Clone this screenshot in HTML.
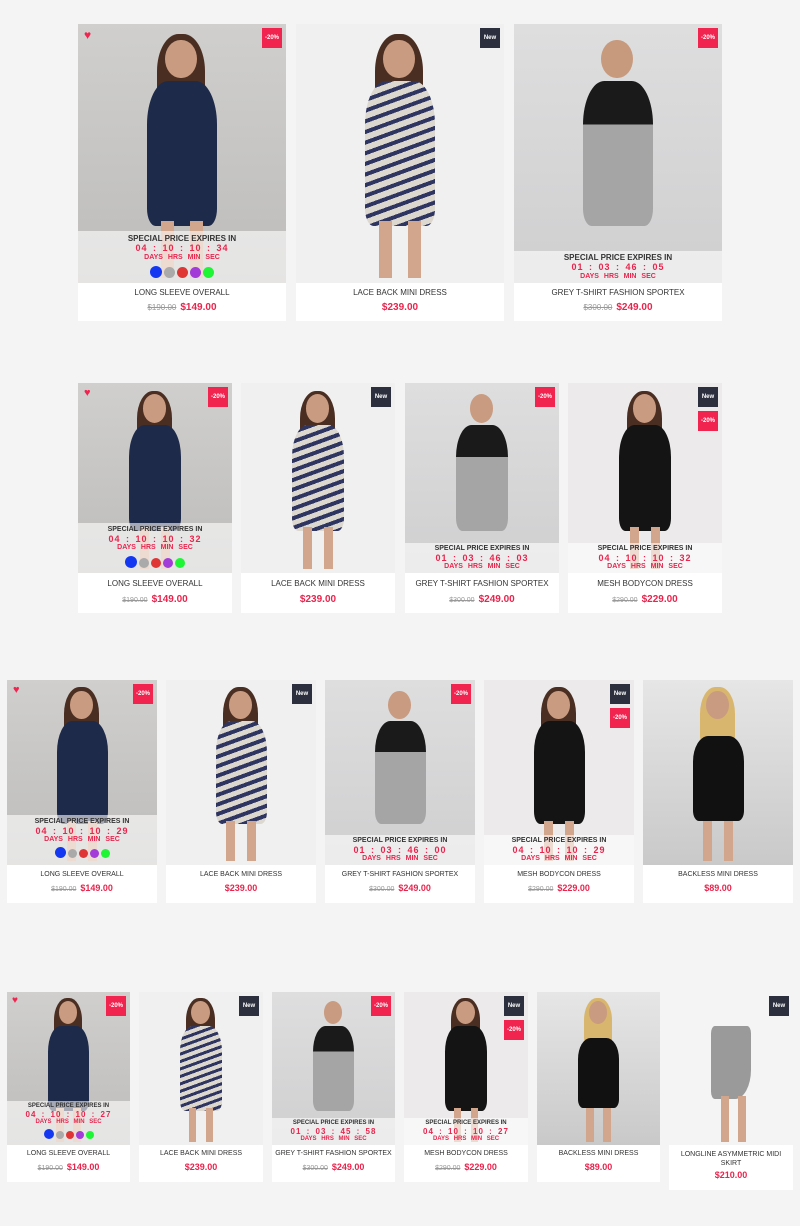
<!DOCTYPE html>
<html><head><meta charset="utf-8"><style>
body{margin:0;background:#f4f4f5;font-family:"Liberation Sans",sans-serif;width:800px;height:1226px;position:relative;overflow:hidden}
.c{position:absolute;background:#fff}
.im{position:absolute;left:0;top:0;width:100%;overflow:hidden}
.h{position:absolute;left:42%;top:6%;width:15%;height:15%;border-radius:50%;background:#c99b80}
.hair{position:absolute;left:38%;top:4%;width:23%;height:32%;border-radius:45% 45% 20% 20%;background:#4a2e22}
.b{position:absolute;left:33%;top:22%;width:34%;height:56%;border-radius:30% 30% 12% 12%}
.leg{position:absolute;top:76%;width:6%;height:22%;background:#d2a68c}
.ov{position:absolute;left:0;width:100%;background:rgba(255,255,255,.6);text-align:center;color:#e8254d;font-weight:bold;line-height:1.15}
.ov .s{color:#333}
.ov .n{letter-spacing:1px;word-spacing:2px}
.ov .l{word-spacing:3px}
.bd{position:absolute;right:6px;top:6px;color:#fff;font-weight:bold;text-align:center}
.red{background:#f0244f}.nw{background:#2b2f3e}
.t{position:absolute;left:0;width:100%;text-align:center;color:#333;text-transform:uppercase}
.p{position:absolute;left:0;width:100%;text-align:center;color:#e8254d;font-weight:bold}
.p s{color:#999;font-weight:normal;margin-right:4px}
.sw{display:inline-block;border-radius:50%;margin:0 1px}
.heart{position:absolute;color:#f0244f}
</style></head><body>

<!-- ROW 1 -->
<div class="c" style="left:78px;top:24px;width:208px;height:297px">
 <div class="im" style="height:259px;background:linear-gradient(#d0cfcd,#bdbcba)">
  <div class="hair"></div><div class="h"></div><div class="b" style="background:#1e2a4a"></div><div class="leg" style="left:40%"></div><div class="leg" style="left:54%"></div></div>
 <div class="ov" style="top:207px;height:52px;font-size:8px"><div class="s" style="padding-top:3px">SPECIAL PRICE EXPIRES IN</div><div class="n" style="font-size:9px">04 : 10 : 10 : 34</div><div class="l" style="font-size:7px">DAYS HRS MIN SEC</div>
  <div style="margin-top:4px"><span class="sw" style="width:12px;height:12px;background:#1438f2"></span><span class="sw" style="width:11px;height:11px;background:#aaa"></span><span class="sw" style="width:11px;height:11px;background:#e03535"></span><span class="sw" style="width:11px;height:11px;background:#a23bd8"></span><span class="sw" style="width:11px;height:11px;background:#1ef535"></span></div></div>
 <div class="heart" style="left:6px;top:4px;font-size:12px">♥</div>
 <div class="bd red" style="width:20px;height:20px;line-height:20px;font-size:6px;top:4px;right:4px">-20%</div>
 <div class="t" style="top:264px;font-size:8px">Long Sleeve Overall</div>
 <div class="p" style="top:278px;font-size:10px"><s style="font-size:8px">$190.00</s>$149.00</div>
</div>
<div class="c" style="left:296px;top:24px;width:208px;height:297px">
 <div class="im" style="height:259px;background:#f1f0f0"><div class="hair"></div><div class="h"></div><div class="b" style="background:repeating-linear-gradient(160deg,#dcd8cf 0 6px,#2e3560 6px 10px)"></div><div class="leg" style="left:40%"></div><div class="leg" style="left:54%"></div></div>
 <div class="bd nw" style="width:20px;height:20px;line-height:20px;font-size:6px;top:4px;right:4px">New</div>
 <div class="t" style="top:264px;font-size:8px">Lace Back Mini Dress</div>
 <div class="p" style="top:278px;font-size:10px">$239.00</div>
</div>
<div class="c" style="left:514px;top:24px;width:208px;height:297px">
 <div class="im" style="height:259px;background:linear-gradient(#dededf,#cfcfd0)"><div class="h" style="background:#c79a7d"></div><div class="b" style="background:linear-gradient(#1a1a1a 30%,#a5a5a5 30%)"></div></div>
 <div class="ov" style="top:227px;height:32px;font-size:8px"><div class="s" style="padding-top:2px">SPECIAL PRICE EXPIRES IN</div><div class="n" style="font-size:9px">01 : 03 : 46 : 05</div><div class="l" style="font-size:7px">DAYS HRS MIN SEC</div></div>
 <div class="bd red" style="width:20px;height:20px;line-height:20px;font-size:6px;top:4px;right:4px">-20%</div>
 <div class="t" style="top:264px;font-size:8px">Grey T-Shirt Fashion Sportex</div>
 <div class="p" style="top:278px;font-size:10px"><s style="font-size:8px">$300.00</s>$249.00</div>
</div>

<!-- ROW 2 -->
<div class="c" style="left:78px;top:383px;width:154px;height:230px">
 <div class="im" style="height:190px;background:linear-gradient(#d0cfcd,#bdbcba)"><div class="hair"></div><div class="h"></div><div class="b" style="background:#1e2a4a"></div><div class="leg" style="left:40%"></div><div class="leg" style="left:54%"></div></div>
 <div class="ov" style="top:140px;height:50px;font-size:7px"><div class="s" style="padding-top:3px">SPECIAL PRICE EXPIRES IN</div><div class="n" style="font-size:9px">04 : 10 : 10 : 32</div><div class="l">DAYS HRS MIN SEC</div>
  <div style="margin-top:4px"><span class="sw" style="width:12px;height:12px;background:#1438f2"></span><span class="sw" style="width:10px;height:10px;background:#aaa"></span><span class="sw" style="width:10px;height:10px;background:#e03535"></span><span class="sw" style="width:10px;height:10px;background:#a23bd8"></span><span class="sw" style="width:10px;height:10px;background:#1ef535"></span></div></div>
 <div class="heart" style="left:6px;top:4px;font-size:11px">♥</div>
 <div class="bd red" style="width:20px;height:20px;line-height:20px;font-size:6px;top:4px;right:4px">-20%</div>
 <div class="t" style="top:196px;font-size:8px">Long Sleeve Overall</div>
 <div class="p" style="top:211px;font-size:10px"><s style="font-size:7px">$190.00</s>$149.00</div>
</div>
<div class="c" style="left:241px;top:383px;width:154px;height:230px">
 <div class="im" style="height:190px;background:#f1f0f0"><div class="hair"></div><div class="h"></div><div class="b" style="background:repeating-linear-gradient(160deg,#dcd8cf 0 5px,#2e3560 5px 9px)"></div><div class="leg" style="left:40%"></div><div class="leg" style="left:54%"></div></div>
 <div class="bd nw" style="width:20px;height:20px;line-height:20px;font-size:6px;top:4px;right:4px">New</div>
 <div class="t" style="top:196px;font-size:8px">Lace Back Mini Dress</div>
 <div class="p" style="top:211px;font-size:10px">$239.00</div>
</div>
<div class="c" style="left:405px;top:383px;width:154px;height:230px">
 <div class="im" style="height:190px;background:linear-gradient(#dededf,#cfcfd0)"><div class="h"></div><div class="b" style="background:linear-gradient(#1a1a1a 30%,#a5a5a5 30%)"></div></div>
 <div class="ov" style="top:160px;height:30px;font-size:7px"><div class="s" style="padding-top:2px">SPECIAL PRICE EXPIRES IN</div><div class="n" style="font-size:9px">01 : 03 : 46 : 03</div><div class="l">DAYS HRS MIN SEC</div></div>
 <div class="bd red" style="width:20px;height:20px;line-height:20px;font-size:6px;top:4px;right:4px">-20%</div>
 <div class="t" style="top:196px;font-size:8px">Grey T-Shirt Fashion Sportex</div>
 <div class="p" style="top:211px;font-size:10px"><s style="font-size:7px">$300.00</s>$249.00</div>
</div>
<div class="c" style="left:568px;top:383px;width:154px;height:230px">
 <div class="im" style="height:190px;background:#eceaeb"><div class="hair"></div><div class="h"></div><div class="b" style="background:#141414"></div><div class="leg" style="left:40%"></div><div class="leg" style="left:54%"></div></div>
 <div class="ov" style="top:160px;height:30px;font-size:7px"><div class="s" style="padding-top:2px">SPECIAL PRICE EXPIRES IN</div><div class="n" style="font-size:9px">04 : 10 : 10 : 32</div><div class="l">DAYS HRS MIN SEC</div></div>
 <div class="bd nw" style="width:20px;height:20px;line-height:20px;font-size:6px;top:4px;right:4px">New</div>
 <div class="bd red" style="width:20px;height:20px;line-height:20px;font-size:6px;top:28px;right:4px">-20%</div>
 <div class="t" style="top:196px;font-size:8px">Mesh Bodycon Dress</div>
 <div class="p" style="top:211px;font-size:10px"><s style="font-size:7px">$290.00</s>$229.00</div>
</div>

<!-- ROW 3 -->
<div class="c" style="left:7px;top:680px;width:150px;height:223px">
 <div class="im" style="height:185px;background:linear-gradient(#d0cfcd,#bdbcba)"><div class="hair"></div><div class="h"></div><div class="b" style="background:#1e2a4a"></div><div class="leg" style="left:40%"></div><div class="leg" style="left:54%"></div></div>
 <div class="ov" style="top:135px;height:50px;font-size:7px"><div class="s" style="padding-top:3px">SPECIAL PRICE EXPIRES IN</div><div class="n" style="font-size:9px">04 : 10 : 10 : 29</div><div class="l">DAYS HRS MIN SEC</div>
  <div style="margin-top:3px"><span class="sw" style="width:11px;height:11px;background:#1438f2"></span><span class="sw" style="width:9px;height:9px;background:#aaa"></span><span class="sw" style="width:9px;height:9px;background:#e03535"></span><span class="sw" style="width:9px;height:9px;background:#a23bd8"></span><span class="sw" style="width:9px;height:9px;background:#1ef535"></span></div></div>
 <div class="heart" style="left:6px;top:4px;font-size:11px">♥</div>
 <div class="bd red" style="width:20px;height:20px;line-height:20px;font-size:6px;top:4px;right:4px">-20%</div>
 <div class="t" style="top:191px;font-size:7px">Long Sleeve Overall</div>
 <div class="p" style="top:203px;font-size:9px"><s style="font-size:7px">$190.00</s>$149.00</div>
</div>
<div class="c" style="left:166px;top:680px;width:150px;height:223px">
 <div class="im" style="height:185px;background:#f1f0f0"><div class="hair"></div><div class="h"></div><div class="b" style="background:repeating-linear-gradient(160deg,#dcd8cf 0 5px,#2e3560 5px 9px)"></div><div class="leg" style="left:40%"></div><div class="leg" style="left:54%"></div></div>
 <div class="bd nw" style="width:20px;height:20px;line-height:20px;font-size:6px;top:4px;right:4px">New</div>
 <div class="t" style="top:191px;font-size:7px">Lace Back Mini Dress</div>
 <div class="p" style="top:203px;font-size:9px">$239.00</div>
</div>
<div class="c" style="left:325px;top:680px;width:150px;height:223px">
 <div class="im" style="height:185px;background:linear-gradient(#dededf,#cfcfd0)"><div class="h"></div><div class="b" style="background:linear-gradient(#1a1a1a 30%,#a5a5a5 30%)"></div></div>
 <div class="ov" style="top:155px;height:30px;font-size:7px"><div class="s" style="padding-top:2px">SPECIAL PRICE EXPIRES IN</div><div class="n" style="font-size:9px">01 : 03 : 46 : 00</div><div class="l">DAYS HRS MIN SEC</div></div>
 <div class="bd red" style="width:20px;height:20px;line-height:20px;font-size:6px;top:4px;right:4px">-20%</div>
 <div class="t" style="top:191px;font-size:7px">Grey T-Shirt Fashion Sportex</div>
 <div class="p" style="top:203px;font-size:9px"><s style="font-size:7px">$300.00</s>$249.00</div>
</div>
<div class="c" style="left:484px;top:680px;width:150px;height:223px">
 <div class="im" style="height:185px;background:#eceaeb"><div class="hair"></div><div class="h"></div><div class="b" style="background:#141414"></div><div class="leg" style="left:40%"></div><div class="leg" style="left:54%"></div></div>
 <div class="ov" style="top:155px;height:30px;font-size:7px"><div class="s" style="padding-top:2px">SPECIAL PRICE EXPIRES IN</div><div class="n" style="font-size:9px">04 : 10 : 10 : 29</div><div class="l">DAYS HRS MIN SEC</div></div>
 <div class="bd nw" style="width:20px;height:20px;line-height:20px;font-size:6px;top:4px;right:4px">New</div>
 <div class="bd red" style="width:20px;height:20px;line-height:20px;font-size:6px;top:28px;right:4px">-20%</div>
 <div class="t" style="top:191px;font-size:7px">Mesh Bodycon Dress</div>
 <div class="p" style="top:203px;font-size:9px"><s style="font-size:7px">$290.00</s>$229.00</div>
</div>
<div class="c" style="left:643px;top:680px;width:150px;height:223px">
 <div class="im" style="height:185px;background:linear-gradient(#e6e6e6,#c9c9c9)"><div class="hair" style="background:#d9b66e"></div><div class="h"></div><div class="b" style="background:#111;top:30%;height:46%"></div><div class="leg" style="left:40%"></div><div class="leg" style="left:54%"></div></div>
 <div class="t" style="top:191px;font-size:7px">Backless Mini Dress</div>
 <div class="p" style="top:203px;font-size:9px">$89.00</div>
</div>

<!-- ROW 4 -->
<div class="c" style="left:7px;top:992px;width:123px;height:190px">
 <div class="im" style="height:153px;background:linear-gradient(#d0cfcd,#bdbcba)"><div class="hair"></div><div class="h"></div><div class="b" style="background:#1e2a4a"></div><div class="leg" style="left:40%"></div><div class="leg" style="left:54%"></div></div>
 <div class="ov" style="top:109px;height:44px;font-size:6px"><div class="s" style="padding-top:2px">SPECIAL PRICE EXPIRES IN</div><div class="n" style="font-size:8px">04 : 10 : 10 : 27</div><div class="l">DAYS HRS MIN SEC</div>
  <div style="margin-top:3px"><span class="sw" style="width:10px;height:10px;background:#1438f2"></span><span class="sw" style="width:8px;height:8px;background:#aaa"></span><span class="sw" style="width:8px;height:8px;background:#e03535"></span><span class="sw" style="width:8px;height:8px;background:#a23bd8"></span><span class="sw" style="width:8px;height:8px;background:#1ef535"></span></div></div>
 <div class="heart" style="left:5px;top:3px;font-size:10px">♥</div>
 <div class="bd red" style="width:20px;height:20px;line-height:20px;font-size:6px;top:4px;right:4px">-20%</div>
 <div class="t" style="top:158px;font-size:7px">Long Sleeve Overall</div>
 <div class="p" style="top:170px;font-size:9px"><s style="font-size:7px">$190.00</s>$149.00</div>
</div>
<div class="c" style="left:139px;top:992px;width:124px;height:190px">
 <div class="im" style="height:153px;background:#f1f0f0"><div class="hair"></div><div class="h"></div><div class="b" style="background:repeating-linear-gradient(160deg,#dcd8cf 0 4px,#2e3560 4px 7px)"></div><div class="leg" style="left:40%"></div><div class="leg" style="left:54%"></div></div>
 <div class="bd nw" style="width:20px;height:20px;line-height:20px;font-size:6px;top:4px;right:4px">New</div>
 <div class="t" style="top:158px;font-size:7px">Lace Back Mini Dress</div>
 <div class="p" style="top:170px;font-size:9px">$239.00</div>
</div>
<div class="c" style="left:272px;top:992px;width:123px;height:190px">
 <div class="im" style="height:153px;background:linear-gradient(#dededf,#cfcfd0)"><div class="h"></div><div class="b" style="background:linear-gradient(#1a1a1a 30%,#a5a5a5 30%)"></div></div>
 <div class="ov" style="top:126px;height:27px;font-size:6px"><div class="s" style="padding-top:2px">SPECIAL PRICE EXPIRES IN</div><div class="n" style="font-size:8px">01 : 03 : 45 : 58</div><div class="l">DAYS HRS MIN SEC</div></div>
 <div class="bd red" style="width:20px;height:20px;line-height:20px;font-size:6px;top:4px;right:4px">-20%</div>
 <div class="t" style="top:158px;font-size:7px">Grey T-Shirt Fashion Sportex</div>
 <div class="p" style="top:170px;font-size:9px"><s style="font-size:7px">$300.00</s>$249.00</div>
</div>
<div class="c" style="left:404px;top:992px;width:124px;height:190px">
 <div class="im" style="height:153px;background:#eceaeb"><div class="hair"></div><div class="h"></div><div class="b" style="background:#141414"></div><div class="leg" style="left:40%"></div><div class="leg" style="left:54%"></div></div>
 <div class="ov" style="top:126px;height:27px;font-size:6px"><div class="s" style="padding-top:2px">SPECIAL PRICE EXPIRES IN</div><div class="n" style="font-size:8px">04 : 10 : 10 : 27</div><div class="l">DAYS HRS MIN SEC</div></div>
 <div class="bd nw" style="width:20px;height:20px;line-height:20px;font-size:6px;top:4px;right:4px">New</div>
 <div class="bd red" style="width:20px;height:20px;line-height:20px;font-size:6px;top:28px;right:4px">-20%</div>
 <div class="t" style="top:158px;font-size:7px">Mesh Bodycon Dress</div>
 <div class="p" style="top:170px;font-size:9px"><s style="font-size:7px">$290.00</s>$229.00</div>
</div>
<div class="c" style="left:537px;top:992px;width:123px;height:190px">
 <div class="im" style="height:153px;background:linear-gradient(#e6e6e6,#c9c9c9)"><div class="hair" style="background:#d9b66e"></div><div class="h"></div><div class="b" style="background:#111;top:30%;height:46%"></div><div class="leg" style="left:40%"></div><div class="leg" style="left:54%"></div></div>
 <div class="t" style="top:158px;font-size:7px">Backless Mini Dress</div>
 <div class="p" style="top:170px;font-size:9px">$89.00</div>
</div>
<div class="c" style="left:669px;top:992px;width:124px;height:198px">
 <div class="im" style="height:153px;background:#f4f4f4"><div class="b" style="background:#9a9a9a;top:22%;height:48%;left:34%;width:32%;border-radius:10% 10% 40% 10%"></div><div class="leg" style="left:42%;top:68%;height:30%"></div><div class="leg" style="left:56%;top:68%;height:30%"></div></div>
 <div class="bd nw" style="width:20px;height:20px;line-height:20px;font-size:6px;top:4px;right:4px">New</div>
 <div class="t" style="top:158px;font-size:7px;line-height:9px;padding:0 10px;box-sizing:border-box">Longline Asymmetric Midi Skirt</div>
 <div class="p" style="top:178px;font-size:9px">$210.00</div>
</div>

</body></html>
